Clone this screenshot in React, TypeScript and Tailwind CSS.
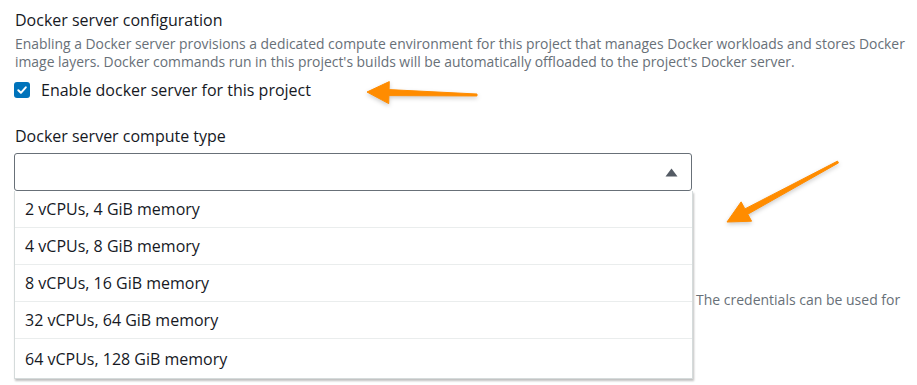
import React from "react";

const items = [
  "2 vCPUs, 4 GiB memory",
  "4 vCPUs, 8 GiB memory",
  "8 vCPUs, 16 GiB memory",
  "32 vCPUs, 64 GiB memory",
  "64 vCPUs, 128 GiB memory",
];

function Arrow({ x1, y1, x2, y2 }: { x1: number; y1: number; x2: number; y2: number }) {
  const dx = x2 - x1;
  const dy = y2 - y1;
  const len = Math.sqrt(dx * dx + dy * dy);
  const ux = dx / len;
  const uy = dy / len;
  const px = -uy;
  const py = ux;
  const headLen = 22;
  const headW = 11;
  const bx = x2 - ux * headLen;
  const by = y2 - uy * headLen;
  const pts = [
    [x1 + px * 1, y1 + py * 1],
    [bx + px * 3, by + py * 3],
    [bx + px * headW, by + py * headW],
    [x2, y2],
    [bx - px * headW, by - py * headW],
    [bx - px * 3, by - py * 3],
    [x1 - px * 1, y1 - py * 1],
  ]
    .map((p) => p.join(","))
    .join(" ");
  return <polygon points={pts} fill="#ff8c00" stroke="#ff8c00" strokeWidth="1" strokeLinejoin="round" />;
}

export default function App() {
  return (
    <div
      className="relative w-[917px] h-[385px] overflow-hidden bg-white text-[#16191f]"
      style={{ fontFamily: '"Open Sans", Arial, sans-serif' }}
    >
      <div className="pl-[15px] pt-[9px]">
        <div className="text-[16px] leading-[22px]">Docker server configuration</div>
        <p className="mt-[4px] text-[13.9px] leading-[18px] text-[#687078]">
          Enabling a Docker server provisions a dedicated compute environment for this project that manages Docker workloads and stores Docker image layers. Docker commands run in this project's builds will be automatically offloaded to the project's Docker server.
        </p>
        <div className="mt-[8px] flex items-center gap-[11px] h-[22px]">
          <div className="w-[16px] h-[16px] rounded-[3px] bg-[#0073bb] flex items-center justify-center ml-[-1px]">
            <svg width="12" height="12" viewBox="0 0 12 12">
              <path d="M2.3 6.2 L4.9 8.8 L9.8 3.3" fill="none" stroke="white" strokeWidth="2" strokeLinecap="round" strokeLinejoin="round" />
            </svg>
          </div>
          <span className="text-[16px] leading-[22px]">Enable docker server for this project</span>
        </div>
        <div className="mt-[24px] text-[16px] leading-[22px]">Docker server compute type</div>
        <div className="relative mt-[6px] w-[678px] ml-[-1px]">
          <div className="h-[38px] border border-[#687078] rounded-[3px] flex items-center justify-end pr-[13px]">
            <svg width="13" height="9" viewBox="0 0 13 9">
              <path d="M6.5 0.5 L12.5 8.5 L0.5 8.5 Z" fill="#545b64" />
            </svg>
          </div>
          <div className="absolute left-0 top-[38px] w-[679px] bg-white border border-[#d5dbdb] border-t-0 shadow-[1px_2px_2px_rgba(0,0,0,0.25)] z-10">
            {items.map((it, i) => (
              <div
                key={it}
                className={`flex items-center pl-[10px] text-[16px] ${i < items.length - 1 ? "h-[37px] border-b border-[#eaeded]" : "h-[39px]"}`}
              >
                {it}
              </div>
            ))}
          </div>
          <div className="pt-[100px] pl-[682px] whitespace-nowrap text-[14px] leading-[18px] text-[#687078]">
            The credentials can be used for
          </div>
        </div>
      </div>
      <svg className="absolute left-0 top-0 pointer-events-none" width="917" height="385" style={{ filter: "drop-shadow(0px 2px 2px rgba(0,0,0,0.2))" }}>
        <Arrow x1={477} y1={95} x2={367} y2={92} />
        <Arrow x1={838} y1={162} x2={727} y2={222} />
      </svg>
    </div>
  );
}
